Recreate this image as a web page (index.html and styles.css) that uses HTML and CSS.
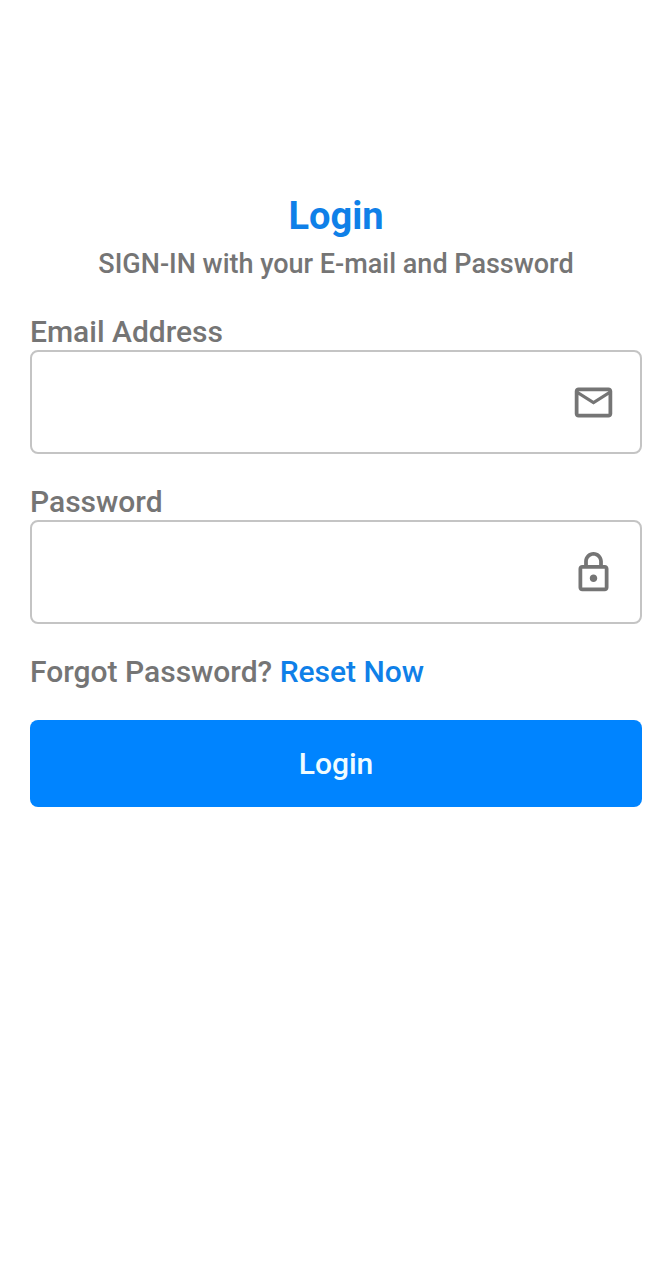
FILE: index.html
```html
<!DOCTYPE html>
<html lang="en">
<head>
<meta charset="utf-8">
<meta name="viewport" content="width=device-width, initial-scale=1">
<title>Login</title>
<link rel="stylesheet" href="styles.css">
</head>
<body>
<main class="page">
  <header class="intro">
    <h1 class="title">Login</h1>
    <p class="subtitle">SIGN-IN with your E-mail and Password</p>
  </header>
  <form class="form">
    <div class="field">
      <label class="label" for="email">Email Address</label>
      <div class="box">
        <input class="input" id="email" type="email">
        <svg class="icon" viewBox="0 0 24 24" aria-hidden="true"><path d="M22 6c0-1.100-.9-2-2-2H4c-1.100 0-2 .9-2 2v12c0 1.100.9 2 2 2h16c1.100 0 2-.9 2-2V6zm-2 0l-8 5-8-5h16zm0 12H4V8l8 5 8-5v10z"/></svg>
      </div>
    </div>
    <div class="field">
      <label class="label" for="password">Password</label>
      <div class="box">
        <input class="input" id="password" type="password">
        <svg class="icon" viewBox="0 0 24 24" aria-hidden="true"><path d="M18 8h-1V6c0-2.760-2.240-5-5-5S7 3.240 7 6v2H6c-1.100 0-2 .9-2 2v10c0 1.100.9 2 2 2h12c1.100 0 2-.9 2-2V10c0-1.100-.9-2-2-2zM9 6c0-1.660 1.340-3 3-3s3 1.340 3 3v2H9V6zm9 14H6V10h12v10zm-6-3c1.100 0 2-.9 2-2s-.9-2-2-2-2 .9-2 2 .9 2 2 2z"/></svg>
      </div>
    </div>
    <p class="forgot">Forgot Password? <a class="link" href="#reset">Reset Now</a></p>
    <button class="submit" type="submit">Login</button>
  </form>
</main>
</body>
</html>
```
FILE: styles.css
```css
* {
  box-sizing: border-box;
}

body {
  margin: 0;
  background: #fff;
  color: #757575;
  font-family: Roboto, "Liberation Sans", sans-serif;
  font-weight: 500;
}

.page {
  padding: 194px 30px 30px;
}

.intro {
  text-align: center;
}

.title {
  margin: 0;
  color: #0f80e8;
  font-size: 38px;
  font-weight: 700;
  line-height: 44px;
}

.subtitle {
  margin: 8px 0 0;
  font-size: 27px;
  line-height: 36px;
}

.form {
  display: flex;
  flex-direction: column;
  gap: 30px;
  margin-top: 32px;
}

.field {
  display: flex;
  flex-direction: column;
}

.label,
.forgot {
  margin: 0;
  font-size: 30px;
  line-height: 36px;
}

.box {
  display: flex;
  align-items: center;
  height: 104px;
  padding-right: 24px;
  border: 2px solid #c4c4c4;
  border-radius: 8px;
}

.input {
  flex: 1;
  min-width: 0;
  height: 100%;
  padding: 0 24px;
  border: 0;
  outline: 0;
  background: transparent;
  color: #212121;
  font: inherit;
  font-size: 30px;
}

.icon {
  width: 45px;
  height: 45px;
  fill: #757575;
}

.link {
  color: #0f80e8;
  text-decoration: none;
}

.submit {
  height: 87px;
  border: 0;
  border-radius: 8px;
  background: #0084ff;
  color: #f0fcff;
  font: inherit;
  font-size: 30px;
}
```
